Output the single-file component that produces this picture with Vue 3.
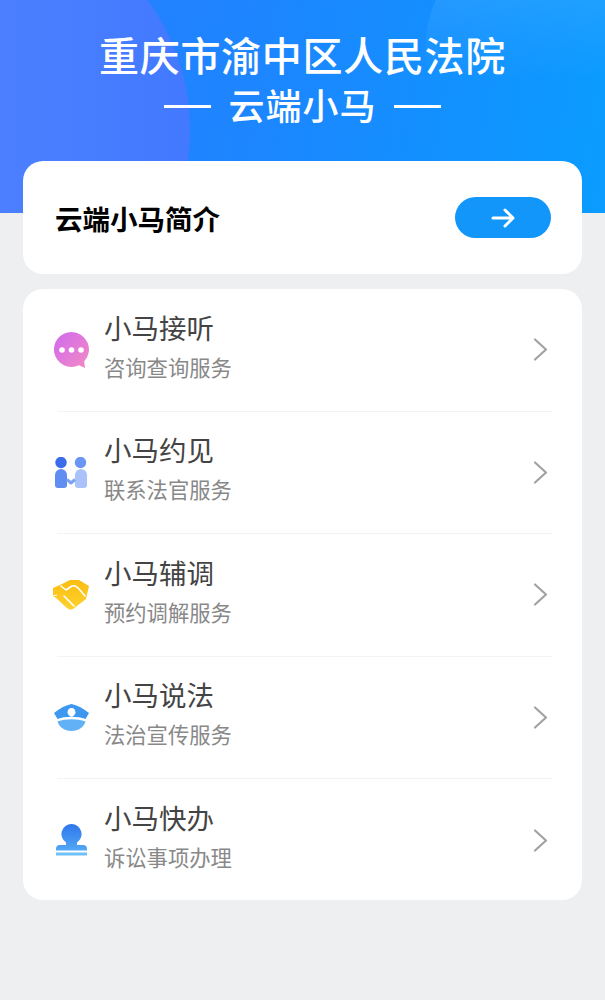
<template>
  <div class="page">
    <header class="hero">
      <div class="blob blob-left"></div>
      <div class="blob blob-right"></div>
      <h1 class="hero-title">重庆市渝中区人民法院</h1>
      <div class="hero-sub">
        <span class="dash"></span>
        <span class="hero-name">云端小马</span>
        <span class="dash"></span>
      </div>
    </header>

    <section class="intro card">
      <span class="intro-title">云端小马简介</span>
      <button class="go-btn" type="button" aria-label="查看简介">
        <svg width="24" height="20" viewBox="0 0 24 20" fill="none" stroke="#fff" stroke-width="3" stroke-linecap="round" stroke-linejoin="round">
          <path d="M2 10h20M14 2l8 8-8 8" />
        </svg>
      </button>
    </section>

    <section class="list card">
      <div v-for="item in items" :key="item.title" class="row">
        <div class="row-icon">
          <svg v-if="item.icon === 'chat'" width="35" height="36" viewBox="0 0 35 36">
            <defs>
              <linearGradient id="chatFill" x1="0" y1="0" x2="1" y2="1">
                <stop offset="0" stop-color="#cf69ee" />
                <stop offset="1" stop-color="#f38ac4" />
              </linearGradient>
            </defs>
            <path d="M17.500 0a17.500 17.500 0 1 0 7.500 33.300L31 36l-.8-6.500A17.500 17.500 0 0 0 17.500 0z" fill="url(#chatFill)" />
            <circle cx="8" cy="18" r="2.800" fill="#fff" />
            <circle cx="17.500" cy="18" r="2.800" fill="#fff" />
            <circle cx="27" cy="18" r="2.800" fill="#fff" />
          </svg>

          <svg v-else-if="item.icon === 'meet'" width="32" height="31" viewBox="0 0 32 31">
            <circle cx="6" cy="5.500" r="5.700" fill="#3a6cec" />
            <circle cx="25.500" cy="5.500" r="5.700" fill="#6a95f2" />
            <path d="M0 18a6 6 0 0 1 12 0v10a3 3 0 0 1-3 3H3a3 3 0 0 1-3-3z" fill="#5f8df2" />
            <path d="M20 18a6 6 0 0 1 12 0v10a3 3 0 0 1-3 3h-6a3 3 0 0 1-3-3z" fill="#a9c3fa" />
            <path d="M12 22.500l4 3.500 4-3.500" fill="none" stroke="#7ea3f5" stroke-width="3" stroke-linejoin="round" />
          </svg>

          <svg v-else-if="item.icon === 'hands'" width="36" height="30" viewBox="0 0 36 30">
            <defs>
              <linearGradient id="handFill" x1="0" y1="0" x2="0" y2="1">
                <stop offset="0" stop-color="#fbbd12" />
                <stop offset="1" stop-color="#fdd22e" />
              </linearGradient>
            </defs>
            <path d="M0 8l9-4 8-4h9l10 6-3 13-13 10q-3 2-6-1L3 18 0 16z" fill="url(#handFill)" />
            <path d="M8 6l5 4 6-4c3-.8 5 .5 7 3l6 7M11 16l10 10" fill="none" stroke="#fff" stroke-width="1.600" stroke-linecap="round" stroke-linejoin="round" />
            <path d="M0 16l4-1" fill="none" stroke="#fff" stroke-width="1" />
          </svg>

          <svg v-else-if="item.icon === 'cap'" width="35" height="27" viewBox="0 0 35 27">
            <path d="M0 9C6 4 12 1 17.500 0 23 1 29 4 35 9l-3.500 6C24 12 11 12 3.500 15z" fill="#3d98f0" />
            <path d="M17.500 4c2.500 0 4 2 4 4.300 0 2.200-2 3.900-4 4.700-2-.8-4-2.500-4-4.700 0-2.300 1.500-4.300 4-4.300z" fill="#fff" />
            <path d="M3.500 17.500c8.500-3 19.500-3 28 0C30 23 24.500 27 17.500 27S5 23 3.500 17.500z" fill="#62b0f5" />
          </svg>

          <svg v-else width="31" height="32" viewBox="0 0 31 32">
            <defs>
              <linearGradient id="stampFill" x1="0" y1="0" x2="0" y2="1">
                <stop offset="0" stop-color="#2f76ec" />
                <stop offset="1" stop-color="#52a8f5" />
              </linearGradient>
            </defs>
            <path d="M15.500 0a10 10 0 0 1 5.500 18.400v2.600h6a4 4 0 0 1 4 4v1.500H0V25a4 4 0 0 1 4-4h6v-2.600A10 10 0 0 1 15.500 0z" fill="url(#stampFill)" />
            <rect x="0" y="28.500" width="31" height="3" fill="#6fc0f7" />
          </svg>
        </div>

        <div class="row-text">
          <div class="row-title">{{ item.title }}</div>
          <div class="row-desc">{{ item.desc }}</div>
        </div>

        <svg class="chevron" width="15" height="23" viewBox="0 0 15 23" fill="none" stroke="#a2a2a2" stroke-width="2.200" stroke-linecap="round" stroke-linejoin="round">
          <path d="M2 1.500l11 10-11 10" />
        </svg>
      </div>
    </section>
  </div>
</template>

<script setup>
const items = [
  { icon: 'chat', title: '小马接听', desc: '咨询查询服务' },
  { icon: 'meet', title: '小马约见', desc: '联系法官服务' },
  { icon: 'hands', title: '小马辅调', desc: '预约调解服务' },
  { icon: 'cap', title: '小马说法', desc: '法治宣传服务' },
  { icon: 'stamp', title: '小马快办', desc: '诉讼事项办理' },
]
</script>

<style>
html,
body {
  margin: 0;
  background: #eeeff1;
}
</style>

<style scoped>
.page {
  position: relative;
  height: 1000px;
  overflow: hidden;
  background: #eeeff1;
  font-family: "Noto Sans CJK SC", "Noto Sans", sans-serif;
}

.hero {
  position: relative;
  height: 213px;
  overflow: hidden;
  padding-top: 31px;
  box-sizing: border-box;
  color: #fff;
  text-align: center;
  background: linear-gradient(100deg, #2a7bff 0%, #1a88ff 50%, #0a9cff 100%);
}

.blob {
  position: absolute;
  border-radius: 50%;
}

.blob-left {
  left: -250px;
  top: -90px;
  width: 440px;
  height: 440px;
  background: linear-gradient(90deg, #4f82ff 40%, #4279ff 100%);
}

.blob-right {
  left: 425px;
  top: -70px;
  width: 240px;
  height: 240px;
  background: linear-gradient(180deg, rgba(70, 175, 255, 0.4) 20%, rgba(70, 175, 255, 0) 62%);
}

.hero-title {
  position: relative;
  margin: 0;
  font-size: 40px;
  line-height: 46px;
  font-weight: 500;
  letter-spacing: 0.7px;
}

.hero-sub {
  position: relative;
  display: flex;
  justify-content: center;
  align-items: center;
  gap: 17px;
  margin-top: 4px;
  font-size: 36px;
  line-height: 46px;
  font-weight: 500;
}

.hero-name {
  letter-spacing: 1px;
}

.dash {
  width: 47px;
  height: 3px;
  margin-top: 4px;
  background: #fff;
}

.card {
  position: relative;
  margin: 0 23px;
  background: #fff;
  border-radius: 20px;
}

.intro {
  display: flex;
  align-items: center;
  justify-content: space-between;
  height: 113px;
  margin-top: -52px;
  padding: 0 31px 0 32px;
  box-sizing: border-box;
}

.intro-title {
  font-size: 27.500px;
  font-weight: 700;
  color: #000;
}

.go-btn {
  display: flex;
  align-items: center;
  justify-content: center;
  width: 96px;
  height: 41px;
  padding: 0;
  border: 0;
  border-radius: 21px;
  background: #1296fa;
}

.list {
  margin-top: 15px;
  height: 611px;
  padding: 0 30px 0 34px;
  box-sizing: border-box;
}

.row {
  display: flex;
  align-items: center;
  height: 122.500px;
  box-sizing: border-box;
  border-bottom: 1px solid #f2f3f5;
}

.row:last-child {
  border-bottom: 0;
}

.row-icon {
  display: flex;
  justify-content: center;
  align-items: center;
  width: 36px;
  margin: 0 15px 0 -4px;
  flex: none;
}

.row-icon svg {
  flex: none;
}

.row-text {
  flex: 1;
  padding-bottom: 9px;
}

.row-title {
  font-size: 27.500px;
  line-height: 36px;
  color: #444;
}

.row-desc {
  margin-top: 7px;
  font-size: 21.300px;
  line-height: 30px;
  color: #888;
}

.chevron {
  flex: none;
  margin-right: 4px;
}
</style>
